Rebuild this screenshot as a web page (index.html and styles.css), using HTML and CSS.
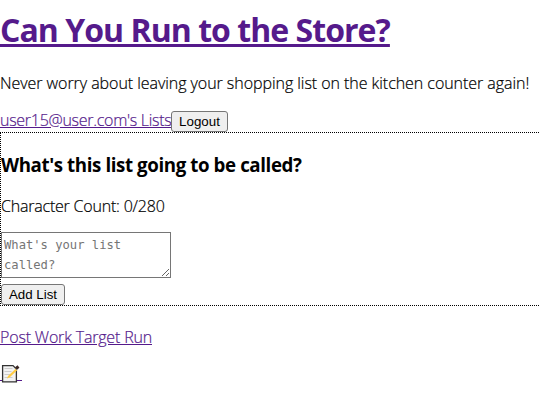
FILE: index.html
```html
<!DOCTYPE html>
<html lang="en">
<head>
<meta charset="utf-8">
<title>Can You Run to the Store?</title>
<link rel="stylesheet" href="styles.css">
</head>
<body>
<header>
<h1 class="title"><a href="#">Can You Run to the Store?</a></h1>
<p class="tagline">Never worry about leaving your shopping list on the kitchen counter again!</p>
<nav class="user-nav"><a class="lists" href="#">user15@user.com's Lists</a><button class="btn logout">Logout</button></nav>
</header>
<form class="list-form">
<h3 class="form-title">What's this list going to be called?</h3>
<p class="count">Character Count: 0/280</p>
<textarea class="name-input" placeholder="What's your list called?"></textarea>
<button class="btn add" type="button">Add List</button>
</form>
<p class="entry"><a href="#">Post Work Target Run</a></p>
<a class="edit" href="#" aria-label="Edit">
<svg width="22" height="20" viewBox="0 0 22 20"><path d="M0 16.500h22" stroke="#551a8b"/><path d="M2.600 1.600h10.400l3.400 3.400v12.900H2.600z" fill="#f3f3f3" stroke="#333" stroke-width="1.300"/><path d="M4.500 4.500h8M4.500 7.500h7M4.500 10.500h6M4.500 13.500h8" stroke="#ccc"/><path d="M7 14.500l1-2.500 8-7.500 1.500 1.500-8 7.500z" fill="#fc4"/><path d="M16 4.500l2.500-2" stroke="#3b2724" stroke-width="3"/><path d="M15.500 4.500l1.500 1.500" stroke="#777"/></svg></a>
</body>
</html>
```
FILE: styles.css
```css
body { margin: 0; font: 16px/21px "Open Sans", "Noto Sans", sans-serif; color: #000; }
a { color: #551a8b; }
.title { margin: 8px 0 0; font-size: 32px; line-height: 43px; font-weight: 700; white-space: nowrap; letter-spacing: -0.96px; }
.title a { text-decoration-thickness: 3px; text-underline-offset: 2px; text-decoration-skip-ink: none; }
.tagline, .lists, .count, .entry { font-weight: 300; -webkit-text-stroke: 0.2px currentColor; }
.tagline { margin: 22px 0 16px; white-space: nowrap; letter-spacing: -0.05px; }
.user-nav { display: flex; align-items: center; height: 22px; }
.lists { width: 171px; letter-spacing: -0.28px; white-space: nowrap; margin-top: -2px; }
.btn { box-sizing: border-box; height: 21px; padding: 0; border: 1px solid #767676; border-radius: 3px; background: #efefef; font: 13.333px "Liberation Sans", sans-serif; color: #000; }
.logout { width: 57px; }
.list-form { border: 1px dotted #000; border-right: 0; height: 172px; display: flex; flex-direction: column; align-items: flex-start; }
.form-title { margin: 19px 0 0; font-size: 18.72px; line-height: 25px; font-weight: 700; letter-spacing: -0.4px; white-space: nowrap; }
.count { margin: 19px 0 15px; letter-spacing: -0.21px; }
.name-input { box-sizing: border-box; width: 170px; height: 46px; margin: 0 0 6px; padding: 2px; border: 1px solid #767676; font: 12.17px/20px "DejaVu Sans Mono", monospace; overflow: hidden; }
.add { width: 64px; }
.entry { margin: 21px 0 16px; letter-spacing: -0.18px; }
.edit { display: block; width: 22px; height: 21px; }
.edit svg { display: block; }
```
